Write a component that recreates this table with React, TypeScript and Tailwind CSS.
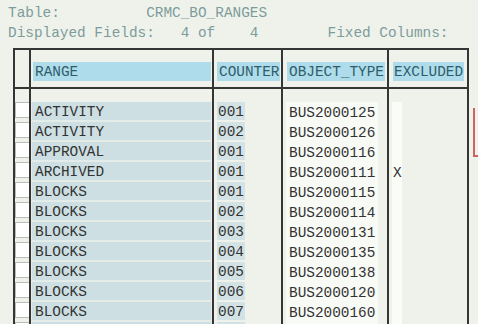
const rows: [string, string, string, string][] = [
  ['ACTIVITY', '001', 'BUS2000125', ''],
  ['ACTIVITY', '002', 'BUS2000126', ''],
  ['APPROVAL', '001', 'BUS2000116', ''],
  ['ARCHIVED', '001', 'BUS2000111', 'X'],
  ['BLOCKS', '001', 'BUS2000115', ''],
  ['BLOCKS', '002', 'BUS2000114', ''],
  ['BLOCKS', '003', 'BUS2000131', ''],
  ['BLOCKS', '004', 'BUS2000135', ''],
  ['BLOCKS', '005', 'BUS2000138', ''],
  ['BLOCKS', '006', 'BUS2000120', ''],
  ['BLOCKS', '007', 'BUS2000160', ''],
  // next row only peeks in at the bottom edge
  ['', '', '', ''],
];

export default function App() {
  return (
    <div className="w-[478px] h-[324px] overflow-hidden bg-[#eef2ea] font-['Liberation_Mono','Courier_New',monospace] text-[14.4px] leading-[20px]">
      {/* title lines */}
      <div className="pl-[8px] pt-[3px] text-[#7d9c9c] whitespace-pre">
        <div>{'Table:          CRMC_BO_RANGES'}</div>
        <div>{'Displayed Fields:   4 of    4        Fixed Columns:'}</div>
      </div>

      <div className="flex mt-[5px] ml-[13px]">
        <div className="grid shrink-0 grid-cols-[14px_181px_67px_104px_78px] gap-x-[2px] border-2 border-[#353535] bg-[#353535] text-[#333333]">
          {/* header */}
          <div className="h-[37px] bg-[#eef2ea]" />
          <div className="h-[37px] bg-[#eef2ea] pt-[12px]">
            <div className="ml-[2px] mr-[1px] h-[19px] bg-[#aedcea] pl-[2px] leading-[21px] text-[#2e5c6a]">RANGE</div>
          </div>
          <div className="h-[37px] bg-[#eef2ea] pt-[12px]">
            <span className="ml-[3px] inline-block h-[19px] bg-[#aedcea] pl-[2px] pr-[1px] leading-[21px] text-[#2e5c6a]">COUNTER</span>
          </div>
          <div className="h-[37px] bg-[#eef2ea] pt-[12px]">
            <span className="ml-[4px] inline-block h-[19px] bg-[#aedcea] pl-[2px] pr-[1px] leading-[21px] text-[#2e5c6a]">OBJECT_TYPE</span>
          </div>
          <div className="h-[37px] bg-[#eef2ea] pt-[12px]">
            <span className="ml-[4px] inline-block h-[19px] bg-[#aedcea] pl-[1px] pr-[1px] leading-[21px] text-[#2e5c6a]">EXCLUDED</span>
          </div>
          <div className="col-span-5 h-[2px] bg-[#353535]" />

          {/* spacer under header */}
          <div className="h-[13px] bg-[#eef2ea]" />
          <div className="h-[13px] bg-[#eef2ea]" />
          <div className="h-[13px] bg-[#eef2ea]" />
          <div className="h-[13px] bg-[#eef2ea]" />
          <div className="h-[13px] bg-[#eef2ea]" />

          {rows.map(([range, counter, type, excl], i) => (
            <div key={i} className="contents">
              <div className="h-[20px] bg-[#eef2ea]">
                <div className="h-[16px] w-[14px] border border-r-0 border-[#b9bcb9] bg-white" />
              </div>
              <div className="h-[20px] bg-[#e4ecea]">
                <div className="mx-[1px] h-[18px] bg-[#cddfe2] pl-[3px] leading-[21px]">{range}</div>
              </div>
              <div className="h-[20px] bg-[#eef2ea]">
                <span className="ml-[3px] inline-block h-[18px] w-[28px] bg-[#d3e3e5] px-[1px] leading-[21px]">{counter}</span>
              </div>
              <div className="h-[20px] bg-[#eef2ea]">
                <div className="ml-[3px] h-[20px] w-[92px] bg-[#f8faf6] pl-[3px] leading-[23px]">{type}</div>
              </div>
              <div className="h-[20px] bg-[#eef2ea]">
                <div className="ml-[3px] h-[20px] w-[10px] bg-[#fafcf8] pl-[1px] leading-[23px]">{excl}</div>
              </div>
            </div>
          ))}
        </div>

        {/* edge of a red framed box to the right */}
        <div className="ml-[4px] mt-[60px] h-[49px] w-[20px] shrink-0 border-l-2 border-b-2 border-[#cf6464]" />
      </div>
    </div>
  );
}
